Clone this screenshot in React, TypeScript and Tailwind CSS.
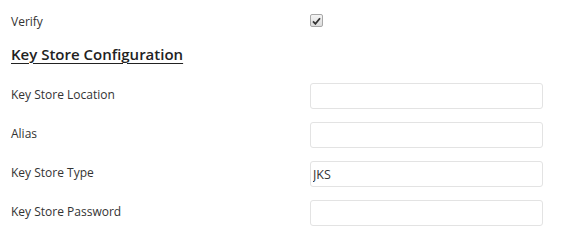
import React from "react";

const font = { fontFamily: '"Open Sans", "Noto Sans", Arial, sans-serif' };

const fields = [
  { label: "Key Store Location", value: "" },
  { label: "Alias", value: "" },
  { label: "Key Store Type", value: "JKS" },
  { label: "Key Store Password", value: "", type: "password" },
];

const inputCls =
  "h-[26px] w-[233px] rounded-[3px] border border-[#e3e3e3] bg-white px-[2px] text-[12.5px] text-[#333] outline-none";

export default function App() {
  return (
    <div className="min-h-[246px] w-[563px] bg-white pl-[11px] pt-[14px] text-[#333]" style={font}>
      {/* Verify */}
      <div className="flex h-[13px] items-center">
        <span className="w-[299px] pt-[3px] text-[12px] leading-none">Verify</span>
        <span className="flex h-[13px] w-[13px] items-center justify-center rounded-[2px] border border-[#a8a8a8] bg-gradient-to-b from-[#f4f4f4] to-[#dcdcdc]">
          <svg width="9" height="8" viewBox="0 0 9 8">
            <path d="M1 4.4 L3.4 6.8 L8 1.2" fill="none" stroke="#333" strokeWidth="1.8" />
          </svg>
        </span>
      </div>

      <h2 className="mt-[17px] text-[15px] font-semibold leading-[20px] text-[#222] underline decoration-1 underline-offset-[3px]">
        Key Store Configuration
      </h2>

      <div className="mt-[19px] flex flex-col gap-[13px]">
        {fields.map((f) => (
          <div key={f.label} className="flex items-center">
            <label className="w-[299px] pb-[3px] text-[12px]">{f.label}</label>
            <input type={f.type ?? "text"} defaultValue={f.value} className={inputCls} />
          </div>
        ))}
      </div>
    </div>
  );
}
